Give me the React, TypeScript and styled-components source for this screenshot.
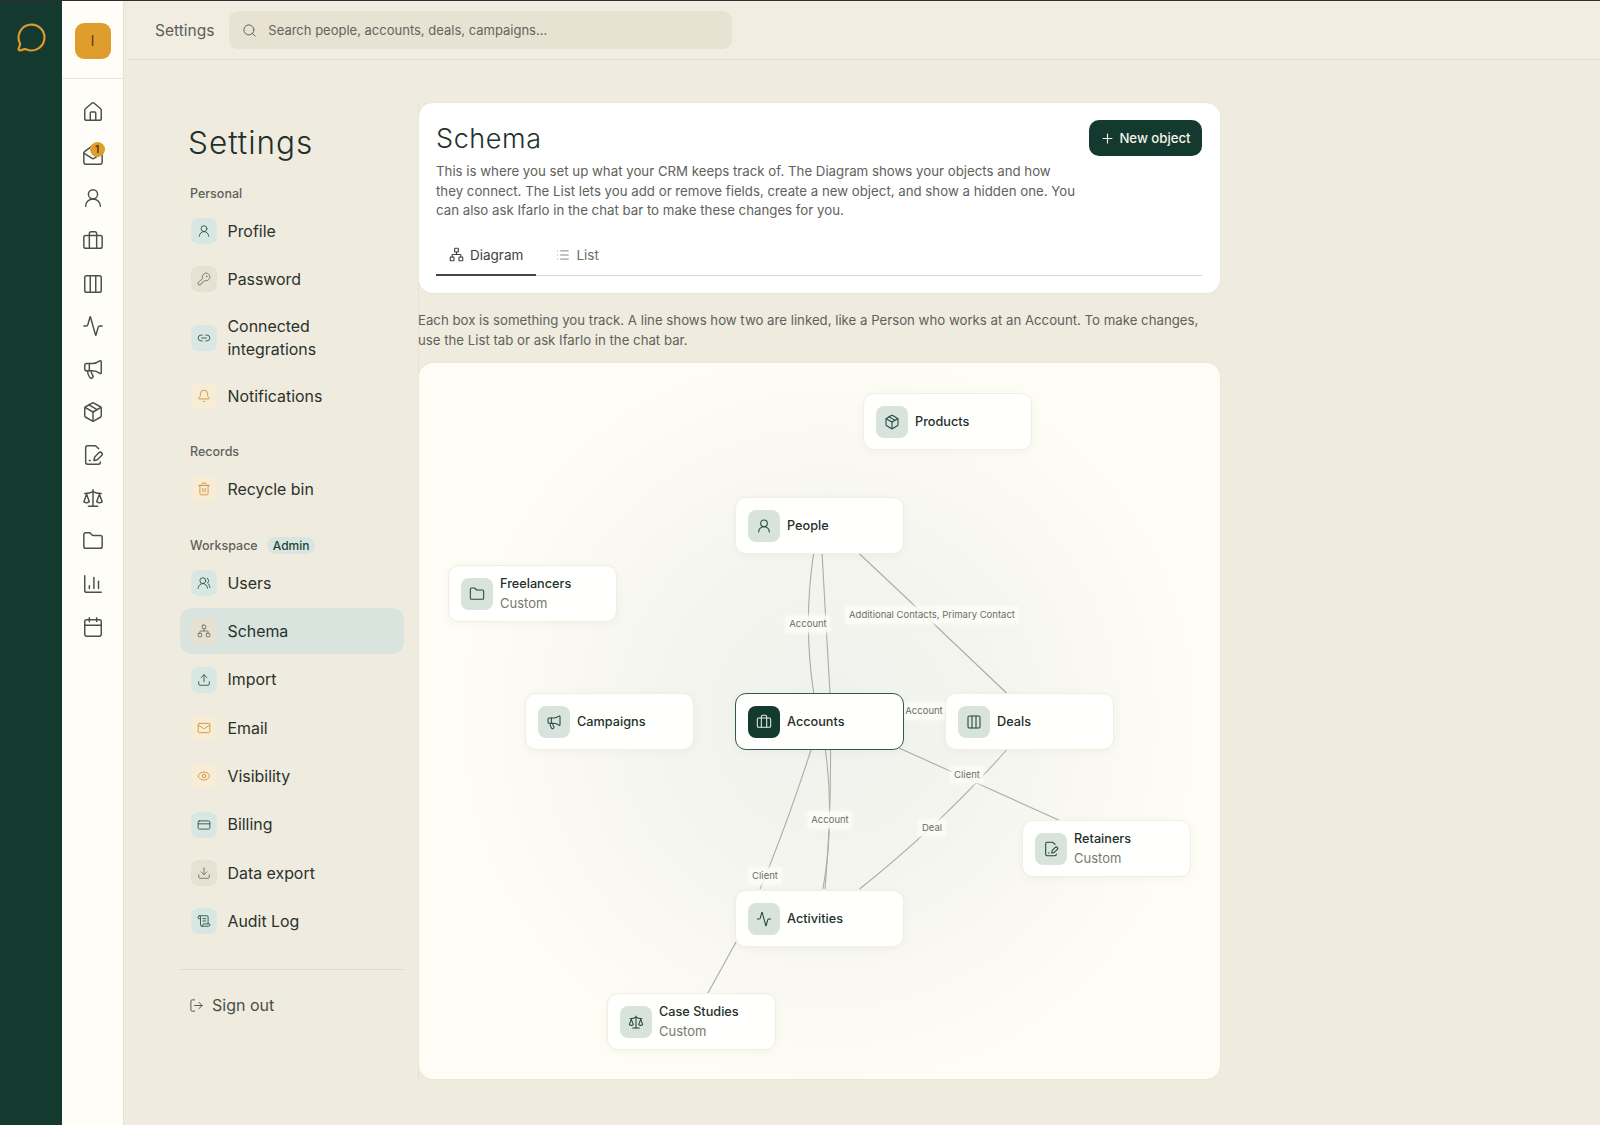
import React from "react";
import styled, { createGlobalStyle } from "styled-components";
import {
  Activity, Bell, Briefcase, ChartColumn, Calendar, Columns3, CreditCard, Download, Eye, FilePenLine, Folder, House,
  KeyRound, Link2, List, LogOut, Mail, MailOpen, Megaphone, MessageCircle, Network, Package, Plus, Scale, ScrollText,
  Search, Trash2, Upload, UserRound, UsersRound,
} from "lucide-react";

const FONT = `"Inter", "Liberation Sans", sans-serif`;

const Global = createGlobalStyle`
  html, body { margin: 0; padding: 0; background: #f0ebdf; }
  body { font-family: ${FONT}; color: #23302b; overflow: hidden; }
  * { box-sizing: border-box; }
`;

const Page = styled.div`
  display: flex; width: 1600px; height: 1125px; overflow: hidden; background: #f0ebdf; border-top: 1px solid #2b2f2d;
`;
const BrandRail = styled.aside`
  width: 62px; flex: none; background: #143a2f; display: flex; justify-content: center; padding-top: 21px; color: #dd9a2e;
`;
const NavRail = styled.nav`
  width: 62px; flex: none; background: #fefdf8; display: flex; flex-direction: column; border-right: 1px solid #e6e1d3;
`;
const NavHead = styled.div`
  height: 78px; flex: none; border-bottom: 1px solid #ebe7da; display: flex; align-items: center; justify-content: center; padding-top: 2px;
`;
const Avatar = styled.div`
  width: 36px; height: 36px; border-radius: 9px; background: #df9d2e; color: #5f4210; display: flex; align-items: center; justify-content: center; font-size: 15px;
`;
const NavList = styled.div`
  display: flex; flex-direction: column; align-items: center; gap: 20.9px; padding-top: 22px; color: #4b504c;
`;
const NavIcon = styled.div`
  position: relative; width: 22px; height: 22px;
`;
const NavBadge = styled.span`
  position: absolute; top: -2px; right: -1px; width: 15px; height: 15px; border-radius: 50%; background: #df9d2e; color: #4a3410;
  font-size: 10px; font-weight: 600; display: flex; align-items: center; justify-content: center;
`;
const Main = styled.div`
  flex: 1; display: flex; flex-direction: column; min-width: 0;
`;
const TopBar = styled.header`
  height: 59px; flex: none; display: flex; align-items: center; gap: 15px; padding: 0 0 0 27px; margin-left: 4px; border-bottom: 1px solid #e4dfcf; background: #f1ede1;
`;
const Crumb = styled.div`
  font-size: 15.5px; color: #5b5f57; padding-top: 1px;
`;
const SearchBox = styled.div`
  width: 503px; height: 38px; border-radius: 9px; background: #e8e2d3; display: flex; align-items: center; gap: 11px; padding-left: 13px; color: #62655c; font-size: 13px;
`;
const Body = styled.div`
  flex: 1; display: flex; padding-left: 56px; min-height: 0;
`;
const SideCol = styled.div`
  width: 224px; flex: none; padding-top: 63px;
`;
const SideTitle = styled.h1`
  margin: 0 0 21px 8px; font-size: 31.5px; line-height: 40px; font-weight: 350; letter-spacing: 1px; color: #23302b;
`;
const SideLabel = styled.div`
  display: flex; align-items: center; gap: 9px; height: 18px; margin: 0 0 6px 10px; font-size: 12.5px; font-weight: 500; color: #5f625a;
`;
const Pill = styled.span`
  height: 17px; padding: 0 6px; border-radius: 9px; background: #d9e6e0; color: #1e4438; font-size: 12px; display: flex; align-items: center;
`;
const SideList = styled.div<{ $mb: number }>`
  display: flex; flex-direction: column; gap: 2.35px; margin-bottom: ${(p) => p.$mb}px;
`;
const SideRow = styled.div<{ $active?: boolean }>`
  display: flex; align-items: center; gap: 10.5px; min-height: 46px; padding: 10px 11px; border-radius: 12px;
  font-size: 15.9px; line-height: 23px; color: #2a322d; background: ${(p) => (p.$active ? "#d8e4dd" : "transparent")};
`;
const toneMap = {
  teal: ["#d9e7e2", "#2f5a4e"],
  sand: ["#e7e1d2", "#787568"],
  amber: ["#f7ecd6", "#d8923a"],
};
const SideIcon = styled.span<{ $tone: keyof typeof toneMap }>`
  width: 26px; height: 26px; flex: none; border-radius: 7px; display: flex; align-items: center; justify-content: center;
  background: ${(p) => toneMap[p.$tone][0]}; color: ${(p) => toneMap[p.$tone][1]};
`;
const Divider = styled.div`
  height: 1px; background: #e1dccc; margin: 25px 0 23px;
`;
const SignOut = styled.div`
  display: flex; align-items: center; gap: 8px; padding-left: 9px; font-size: 16px; line-height: 24px; color: #4a4f49;
`;
const Content = styled.div`
  width: 802px; flex: none; margin: 43px 0 0 14px; display: flex; flex-direction: column; border-left: 1px solid #e7e2d3; height: 977px;
`;
const HeadCard = styled.section`
  height: 190px; background: #fff; border-radius: 14px; padding: 18px 18px 0 17px; box-shadow: 0 0 0 1px #ebe6d8; display: flex; flex-direction: column;
`;
const HeadTop = styled.div`
  display: flex; justify-content: space-between; align-items: flex-start;
`;
const HeadText = styled.div`
  width: 640px;
`;
const Heading = styled.h2`
  margin: 0 0 5px; font-size: 27px; line-height: 36px; font-weight: 350; letter-spacing: 0.6px; color: #23302b;
`;
const Desc = styled.p`
  margin: 0; font-size: 13.25px; line-height: 19.5px; color: #5e625b;
`;
const NewBtn = styled.button`
  width: 113px; height: 36px; border: 0; border-radius: 10px; background: #143a2f; color: #f6f3e8; font: 500 13.2px ${FONT}; display: flex; align-items: center; justify-content: center; gap: 4px; padding: 0; margin-top: -1px;
`;
const Tabs = styled.div`
  display: flex; margin-top: 15px; border-bottom: 1px solid #dcdac6; height: 40px;
`;
const Tab = styled.div<{ $active?: boolean }>`
  display: flex; align-items: center; gap: 6px; height: 40px; padding: 0 13px; font-size: 13.5px; margin-right: ${(p) => (p.$active ? "7px" : "0")};
  color: ${(p) => (p.$active ? "#3c433d" : "#6a6d64")}; border-bottom: 2px solid ${(p) => (p.$active ? "#3f4a42" : "transparent")};
`;
const Hint = styled.p`
  margin: 17px 0 13px -1px; font-size: 13.22px; line-height: 20px; color: #5e625b;
`;
const Canvas = styled.section`
  position: relative; height: 716px; border-radius: 14px; overflow: hidden; box-shadow: 0 0 0 1px #ebe6d8;
  background: radial-gradient(circle 370px at 410px 355px, #f0f1ed 0%, #f5f5ef 45%, #fdfcf5 100%), #fdfcf5;
`;
const Edges = styled.svg`
  position: absolute; inset: 0; width: 100%; height: 100%;
`;
const NodeCard = styled.div<{ $selected?: boolean }>`
  position: absolute; width: 169px; height: 57px; background: #fffffe; border-radius: 11px; display: flex; align-items: center; gap: 7px; padding-left: 12px;
  border: ${(p) => (p.$selected ? "1.5px solid #2f5a4e" : "1px solid #f1eee2")};
  box-shadow: 0 2px 8px rgba(60, 60, 40, 0.04);
`;
const NodeIcon = styled.span<{ $selected?: boolean }>`
  width: 32px; height: 32px; flex: none; border-radius: 8px; display: flex; align-items: center; justify-content: center;
  background: ${(p) => (p.$selected ? "#143a2f" : "#d9e3de")}; color: ${(p) => (p.$selected ? "#e4ebe6" : "#24473b")};
`;
const NodeText = styled.div`
  display: flex; flex-direction: column; gap: 1px;
`;
const NodeName = styled.div`
  font-size: 12.7px; line-height: 19px; font-weight: 500; color: #23302b;
`;
const NodeSub = styled.div`
  font-size: 13px; line-height: 19px; color: #75786f;
`;
const EdgeLabel = styled.span`
  position: absolute; transform: translate(-50%, -50%); padding: 2px 3px; font-size: 9.5px; line-height: 12px; color: #6a6e66; white-space: nowrap;
  background: rgba(253, 253, 248, 0.85); box-shadow: 0 0 4px 1px rgba(253, 253, 248, 0.85);
`;

const ic = { size: 22, strokeWidth: 1.6 };
const si = { size: 14, strokeWidth: 1.6 };
const ni = { size: 16, strokeWidth: 1.6 };
const ox = 419;
const oy = 363;

const navIcons = [House, MailOpen, UserRound, Briefcase, Columns3, Activity, Megaphone, Package, FilePenLine, Scale, Folder, ChartColumn, Calendar];

type Row = { icon: React.ElementType; label: React.ReactNode; tone: keyof typeof toneMap; active?: boolean };
const personal: Row[] = [
  { icon: UserRound, label: "Profile", tone: "teal" },
  { icon: KeyRound, label: "Password", tone: "sand" },
  { icon: Link2, label: <>Connected<br />integrations</>, tone: "teal" },
  { icon: Bell, label: "Notifications", tone: "amber" },
];
const records: Row[] = [{ icon: Trash2, label: "Recycle bin", tone: "amber" }];
const workspace: Row[] = [
  { icon: UsersRound, label: "Users", tone: "teal" },
  { icon: Network, label: "Schema", tone: "sand", active: true },
  { icon: Upload, label: "Import", tone: "teal" },
  { icon: Mail, label: "Email", tone: "amber" },
  { icon: Eye, label: "Visibility", tone: "amber" },
  { icon: CreditCard, label: "Billing", tone: "teal" },
  { icon: Download, label: "Data export", tone: "sand" },
  { icon: ScrollText, label: "Audit Log", tone: "teal" },
];

const nodes: { name: string; x: number; y: number; icon: React.ElementType; sub?: string; selected?: boolean }[] = [
  { name: "Products", x: 863, y: 393, icon: Package },
  { name: "People", x: 735, y: 497, icon: UserRound },
  { name: "Freelancers", x: 448, y: 565, icon: Folder, sub: "Custom" },
  { name: "Campaigns", x: 525, y: 693, icon: Megaphone },
  { name: "Accounts", x: 735, y: 693, icon: Briefcase, selected: true },
  { name: "Deals", x: 945, y: 693, icon: Columns3 },
  { name: "Retainers", x: 1022, y: 820, icon: FilePenLine, sub: "Custom" },
  { name: "Activities", x: 735, y: 890, icon: Activity },
  { name: "Case Studies", x: 607, y: 993, icon: Scale, sub: "Custom" },
];

const edges = [
  "M813.7 553 Q803 623 813.7 693",
  "M822 553 Q826 623 830 693",
  "M858.6 553 Q930 620 1006.5 693",
  "M899 748 L1058.6 820",
  "M1006.5 750 Q940 825 859.6 889",
  "M811 750 Q785 830 760 889",
  "M825.4 750 Q835 820 823 889",
  "M830.5 750 Q831 820 825 889",
  "M736 942 L708 993",
];
const labels: { text: string; x: number; y: number }[] = [
  { text: "Account", x: 808, y: 624 },
  { text: "Additional Contacts, Primary Contact", x: 932, y: 615 },
  { text: "Account", x: 924, y: 711 },
  { text: "Client", x: 967, y: 775 },
  { text: "Account", x: 830, y: 820 },
  { text: "Deal", x: 932, y: 828 },
  { text: "Client", x: 765, y: 876 },
];

function Section({ rows, mb }: { rows: Row[]; mb: number }) {
  return (
    <SideList $mb={mb}>
      {rows.map((r, i) => (
        <SideRow key={i} $active={r.active}>
          <SideIcon $tone={r.tone}><r.icon {...si} /></SideIcon>
          <span>{r.label}</span>
        </SideRow>
      ))}
    </SideList>
  );
}

export default function App() {
  return (
    <Page>
      <Global />
      <BrandRail><MessageCircle size={31} strokeWidth={1.7} /></BrandRail>
      <NavRail>
        <NavHead><Avatar>I</Avatar></NavHead>
        <NavList>
          {navIcons.map((I, i) => (
            <NavIcon key={i}>
              <I {...ic} />
              {i === 1 && <NavBadge>1</NavBadge>}
            </NavIcon>
          ))}
        </NavList>
      </NavRail>
      <Main>
        <TopBar>
          <Crumb>Settings</Crumb>
          <SearchBox><Search size={15} strokeWidth={1.6} />Search people, accounts, deals, campaigns...</SearchBox>
        </TopBar>
        <Body>
          <SideCol>
            <SideTitle>Settings</SideTitle>
            <SideLabel>Personal</SideLabel>
            <Section rows={personal} mb={23} />
            <SideLabel>Records</SideLabel>
            <Section rows={records} mb={24} />
            <SideLabel>Workspace <Pill>Admin</Pill></SideLabel>
            <Section rows={workspace} mb={0} />
            <Divider />
            <SignOut><LogOut size={15} strokeWidth={1.5} />Sign out</SignOut>
          </SideCol>
          <Content>
            <HeadCard>
              <HeadTop>
                <HeadText>
                  <Heading>Schema</Heading>
                  <Desc>This is where you set up what your CRM keeps track of. The Diagram shows your objects and how they connect. The List lets you add or remove fields, create a new object, and show a hidden one. You can also ask Ifarlo in the chat bar to make these changes for you.</Desc>
                </HeadText>
                <NewBtn><Plus size={15} strokeWidth={1.8} />New object</NewBtn>
              </HeadTop>
              <Tabs>
                <Tab $active><Network size={15} strokeWidth={1.8} />Diagram</Tab>
                <Tab><List size={14} strokeWidth={1.4} />List</Tab>
              </Tabs>
            </HeadCard>
            <Hint>Each box is something you track. A line shows how two are linked, like a Person who works at an Account. To make changes, use the List tab or ask Ifarlo in the chat bar.</Hint>
            <Canvas>
              <Edges viewBox={`${ox} ${oy} 801 716`} fill="none" stroke="#a9aea4" strokeWidth="1.1">
                {edges.map((d, i) => <path key={i} d={d} />)}
              </Edges>
              {labels.map((l, i) => (
                <EdgeLabel key={i} style={{ left: l.x - ox, top: l.y - oy }}>{l.text}</EdgeLabel>
              ))}
              {nodes.map((n) => (
                <NodeCard key={n.name} $selected={n.selected} style={{ left: n.x - ox, top: n.y - oy }}>
                  <NodeIcon $selected={n.selected}><n.icon {...ni} /></NodeIcon>
                  <NodeText>
                    <NodeName>{n.name}</NodeName>
                    {n.sub && <NodeSub>{n.sub}</NodeSub>}
                  </NodeText>
                </NodeCard>
              ))}
            </Canvas>
          </Content>
        </Body>
      </Main>
    </Page>
  );
}
